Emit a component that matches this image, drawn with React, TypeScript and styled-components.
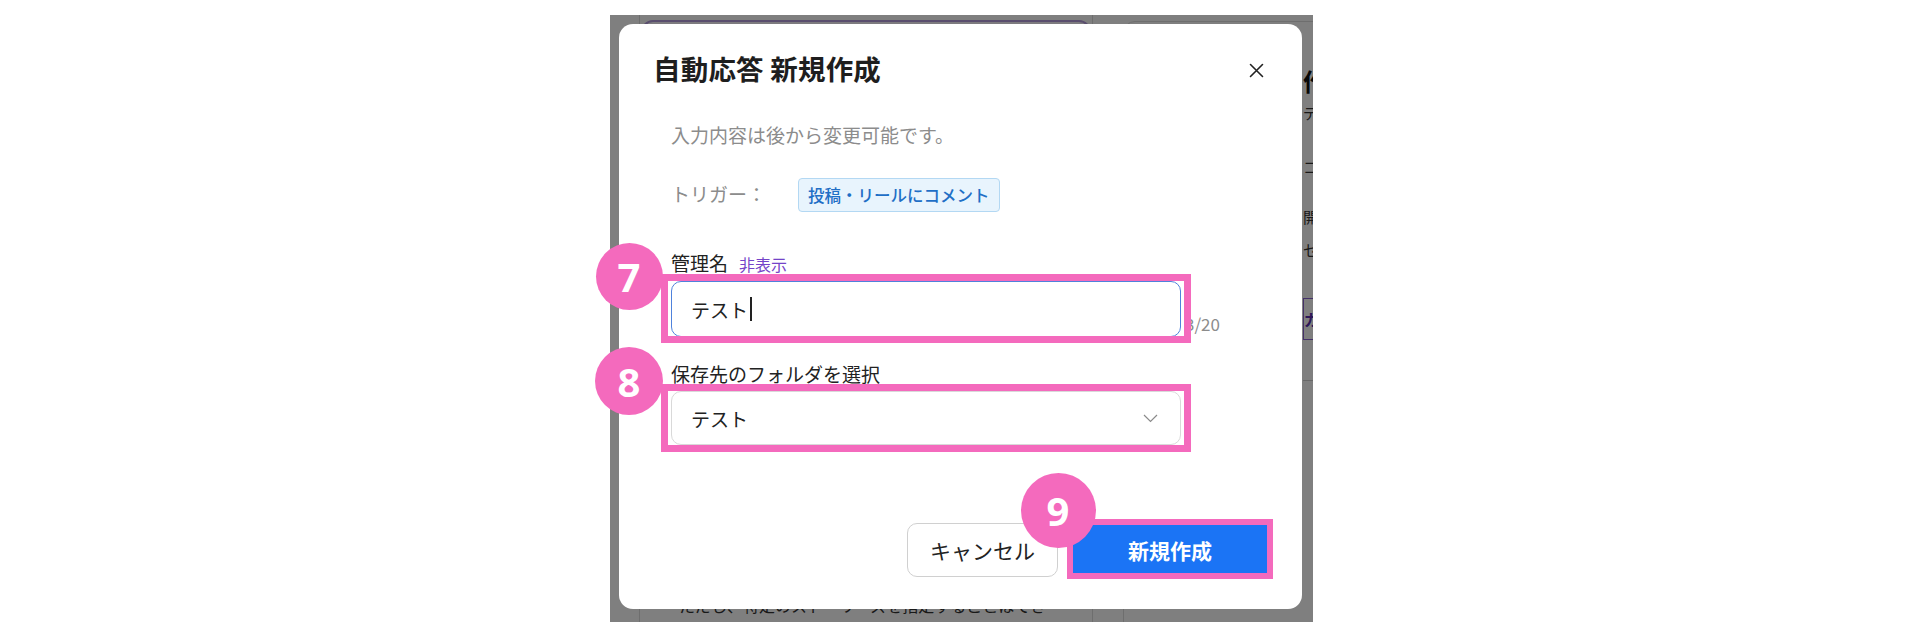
import React from 'react'
import styled, { createGlobalStyle } from 'styled-components'

const pink = '#f46abd'

const GlobalStyle = createGlobalStyle`
  html, body {
    margin: 0;
    padding: 0;
    background: #fff;
  }
  body {
    font-family: "Noto Sans CJK JP", "Noto Sans", sans-serif;
  }
`

type InsetProps = { $top: number; $right: number; $bottom: number; $left: number; $width: number }
type MarkerProps = { $x: number; $y: number; $size: number }

export default function App() {
    return (
        <Stage>
            <GlobalStyle />
            <Shot>
                <BackPage>
                    <LeftCard>
                        <OptionBox />
                        <Note>ただし、特定のストーリーズを指定することはでき</Note>
                    </LeftCard>
                    <RightCard>
                        <PanelTitle>作成する自動応答</PanelTitle>
                        <PanelLine $gap={3}>デフォルトの返信内容を設定します</PanelLine>
                        <PanelLine $gap={30}>コメントに自動で返信します</PanelLine>
                        <PanelLine $gap={26}>開始日時を設定できます</PanelLine>
                        <PanelLine $gap={9}>セグメントを選択してください</PanelLine>
                        <GhostButton>ガイドを見る</GhostButton>
                        <Divider />
                    </RightCard>
                </BackPage>
                <Dim />

                <Modal>
                    <Header>
                        <Title>自動応答 新規作成</Title>
                        <CloseButton aria-label="close">
                            <svg width="15" height="15" viewBox="0 0 15 15">
                                <path d="M1.5 1.5 L13.5 13.5 M13.5 1.5 L1.5 13.5" stroke="#222" strokeWidth="1.6" strokeLinecap="round" />
                            </svg>
                        </CloseButton>
                    </Header>

                    <Body>
                        <Subtitle>入力内容は後から変更可能です。</Subtitle>
                        <TriggerRow>
                            <TriggerLabel>トリガー：</TriggerLabel>
                            <Badge>投稿・リールにコメント</Badge>
                        </TriggerRow>

                        <Field $gap={38}>
                            <Label>
                                管理名<Hint>非表示</Hint>
                            </Label>
                            <InputRow>
                                <Target>
                                    <TextBox>
                                        テスト<Caret />
                                    </TextBox>
                                    <Highlight $top={-7} $right={-10} $bottom={-6} $left={-10} $width={7} />
                                    <Marker $x={-42} $y={-5} $size={67}>7</Marker>
                                </Target>
                                <Counter>3/20</Counter>
                            </InputRow>
                        </Field>

                        <Field $gap={24}>
                            <Label>保存先のフォルダを選択</Label>
                            <Target>
                                <SelectBox>
                                    テスト
                                    <svg width="15" height="9" viewBox="0 0 15 9">
                                        <path d="M1 1 L7.5 7.5 L14 1" fill="none" stroke="#8a8a8a" strokeWidth="1.2" />
                                    </svg>
                                </SelectBox>
                                <Highlight $top={-7} $right={-10} $bottom={-7} $left={-10} $width={7} />
                                <Marker $x={-42} $y={-10} $size={68}>8</Marker>
                            </Target>
                        </Field>
                    </Body>

                    <Footer>
                        <CancelButton>キャンセル</CancelButton>
                        <Target>
                            <PrimaryButton>新規作成</PrimaryButton>
                            <Highlight $top={-4} $right={-2} $bottom={-2} $left={-2} $width={6} />
                            <Marker $x={-11} $y={-13} $size={75}>9</Marker>
                        </Target>
                    </Footer>
                </Modal>
            </Shot>
        </Stage>
    )
}

const Stage = styled.div`
    width: 1920px;
    height: 640px;
    box-sizing: border-box;
    padding: 15px 0 0 610px;
    background: #fff;
    overflow: hidden;
`

const Shot = styled.div`
    position: relative;
    width: 703px;
    height: 607px;
`

const BackPage = styled.div`
    width: 100%;
    height: 100%;
    box-sizing: border-box;
    display: flex;
    gap: 30px;
    padding-left: 29px;
    overflow: hidden;
    background: #fff;
`

const LeftCard = styled.div`
    flex: 0 0 454px;
    height: 640px;
    box-sizing: border-box;
    display: flex;
    flex-direction: column;
    border: 1px solid #dcdcdc;
    border-top: none;
    padding: 5px 1px 37px;
`

const OptionBox = styled.div`
    height: 90px;
    border: 2px solid #b49cdc;
    border-radius: 12px;
    background: #faf7ff;
`

const Note = styled.p`
    margin: auto 0 0;
    padding-left: 38px;
    font-size: 16px;
    line-height: 24px;
    color: #333;
    white-space: nowrap;
`

const RightCard = styled.div`
    flex: 0 0 420px;
    margin-top: 6px;
    height: 640px;
    box-sizing: border-box;
    border: 1px solid #dcdcdc;
    border-radius: 12px;
    padding: 42px 0 0 179px;
    display: flex;
    flex-direction: column;
`

const PanelTitle = styled.h2`
    margin: 0;
    font-size: 24px;
    line-height: 34px;
    font-weight: 700;
    color: #111;
    white-space: nowrap;
`

const PanelLine = styled.p<{ $gap: number }>`
    margin: ${p => p.$gap}px 0 0;
    font-size: 15px;
    line-height: 24px;
    color: #333;
    white-space: nowrap;
`

const GhostButton = styled.div`
    margin-top: 36px;
    height: 42px;
    box-sizing: border-box;
    border: 1px solid #8a63d2;
    color: #5b2fb0;
    font-size: 16px;
    font-weight: 700;
    display: flex;
    align-items: center;
    white-space: nowrap;
`

const Divider = styled.div`
    margin-top: 40px;
    height: 1px;
    background: #d0d0d0;
`

const Dim = styled.div`
    position: absolute;
    inset: 0;
    background: rgba(0, 0, 0, 0.5);
`

const Modal = styled.div`
    position: absolute;
    left: 9px;
    top: 9px;
    width: 683px;
    height: 585px;
    box-sizing: border-box;
    background: #fff;
    border-radius: 14px;
    padding: 26px 0 32px;
    display: flex;
    flex-direction: column;
`

const Header = styled.div`
    display: flex;
    align-items: center;
    justify-content: space-between;
    height: 36px;
    padding: 0 38px 0 34px;
`

const Title = styled.h1`
    margin: 0;
    font-size: 27.5px;
    line-height: 36px;
    font-weight: 700;
    color: #1e1e1e;
    letter-spacing: 0.2px;
`

const CloseButton = styled.button`
    border: none;
    background: none;
    padding: 0;
    width: 15px;
    height: 15px;
    display: flex;
    margin-top: 4px;
`

const Body = styled.div`
    padding-left: 52px;
    display: flex;
    flex-direction: column;
`

const Subtitle = styled.p`
    margin: 35px 0 0;
    font-size: 19px;
    line-height: 28px;
    color: #8c8c8c;
`

const TriggerRow = styled.div`
    margin-top: 29px;
    height: 34px;
    display: flex;
    align-items: center;
`

const TriggerLabel = styled.span`
    width: 127px;
    font-size: 19px;
    color: #8c8c8c;
    margin-top: -3px;
`

const Badge = styled.span`
    height: 34px;
    box-sizing: border-box;
    padding: 0 9px;
    display: inline-flex;
    align-items: center;
    background: #e8f4fd;
    border: 1px solid #b3d8f3;
    border-radius: 4px;
    color: #1f6fc6;
    font-size: 16.5px;
    font-weight: 500;
`

const Field = styled.div<{ $gap: number }>`
    margin-top: ${p => p.$gap}px;
    display: flex;
    flex-direction: column;
    align-items: flex-start;
`

const Label = styled.label`
    font-size: 19px;
    line-height: 26px;
    color: #222;
    margin-bottom: 4px;
`

const Hint = styled.span`
    margin-left: 11px;
    font-size: 16px;
    color: #7443c8;
`

const InputRow = styled.div`
    display: flex;
    align-items: flex-end;
`

const Target = styled.div`
    position: relative;
    width: fit-content;
`

const TextBox = styled.div`
    width: 510px;
    height: 56px;
    box-sizing: border-box;
    border: 1.5px solid #4f82dc;
    border-radius: 10px;
    padding: 0 19px;
    display: flex;
    align-items: center;
    font-size: 19px;
    color: #222;
`

const Caret = styled.span`
    display: inline-block;
    width: 1.5px;
    height: 24px;
    margin-left: 2px;
    background: #222;
`

const Counter = styled.span`
    margin: 0 0 2px 4px;
    font-size: 17px;
    line-height: 22px;
    color: #8c8c8c;
`

const SelectBox = styled.div`
    width: 510px;
    height: 54px;
    box-sizing: border-box;
    border: 1px solid #d9d9d9;
    border-radius: 10px;
    padding: 0 22px 0 19px;
    display: flex;
    align-items: center;
    justify-content: space-between;
    font-size: 19px;
    color: #222;
`

const Highlight = styled.div<InsetProps>`
    position: absolute;
    top: ${p => p.$top}px;
    right: ${p => p.$right}px;
    bottom: ${p => p.$bottom}px;
    left: ${p => p.$left}px;
    border: ${p => p.$width}px solid ${pink};
    pointer-events: none;
`

const Marker = styled.div<MarkerProps>`
    position: absolute;
    left: ${p => p.$x - p.$size / 2}px;
    top: ${p => p.$y - p.$size / 2}px;
    width: ${p => p.$size}px;
    height: ${p => p.$size}px;
    border-radius: 50%;
    background: ${pink};
    color: #fff;
    font-family: "Noto Sans", "Open Sans", sans-serif;
    font-weight: 700;
    font-size: 40px;
    display: flex;
    align-items: center;
    justify-content: center;
`

const Footer = styled.div`
    margin-top: auto;
    display: flex;
    justify-content: flex-end;
    gap: 11px;
    padding-right: 31px;
`

const CancelButton = styled.button`
    width: 151px;
    height: 54px;
    border: 1px solid #d0d0d0;
    border-radius: 10px;
    background: #fff;
    font-family: inherit;
    font-size: 21px;
    color: #222;
`

const PrimaryButton = styled.button`
    width: 202px;
    height: 54px;
    border: none;
    border-radius: 6px;
    background: #1b74f5;
    font-family: inherit;
    font-size: 21px;
    font-weight: 700;
    color: #fff;
`
